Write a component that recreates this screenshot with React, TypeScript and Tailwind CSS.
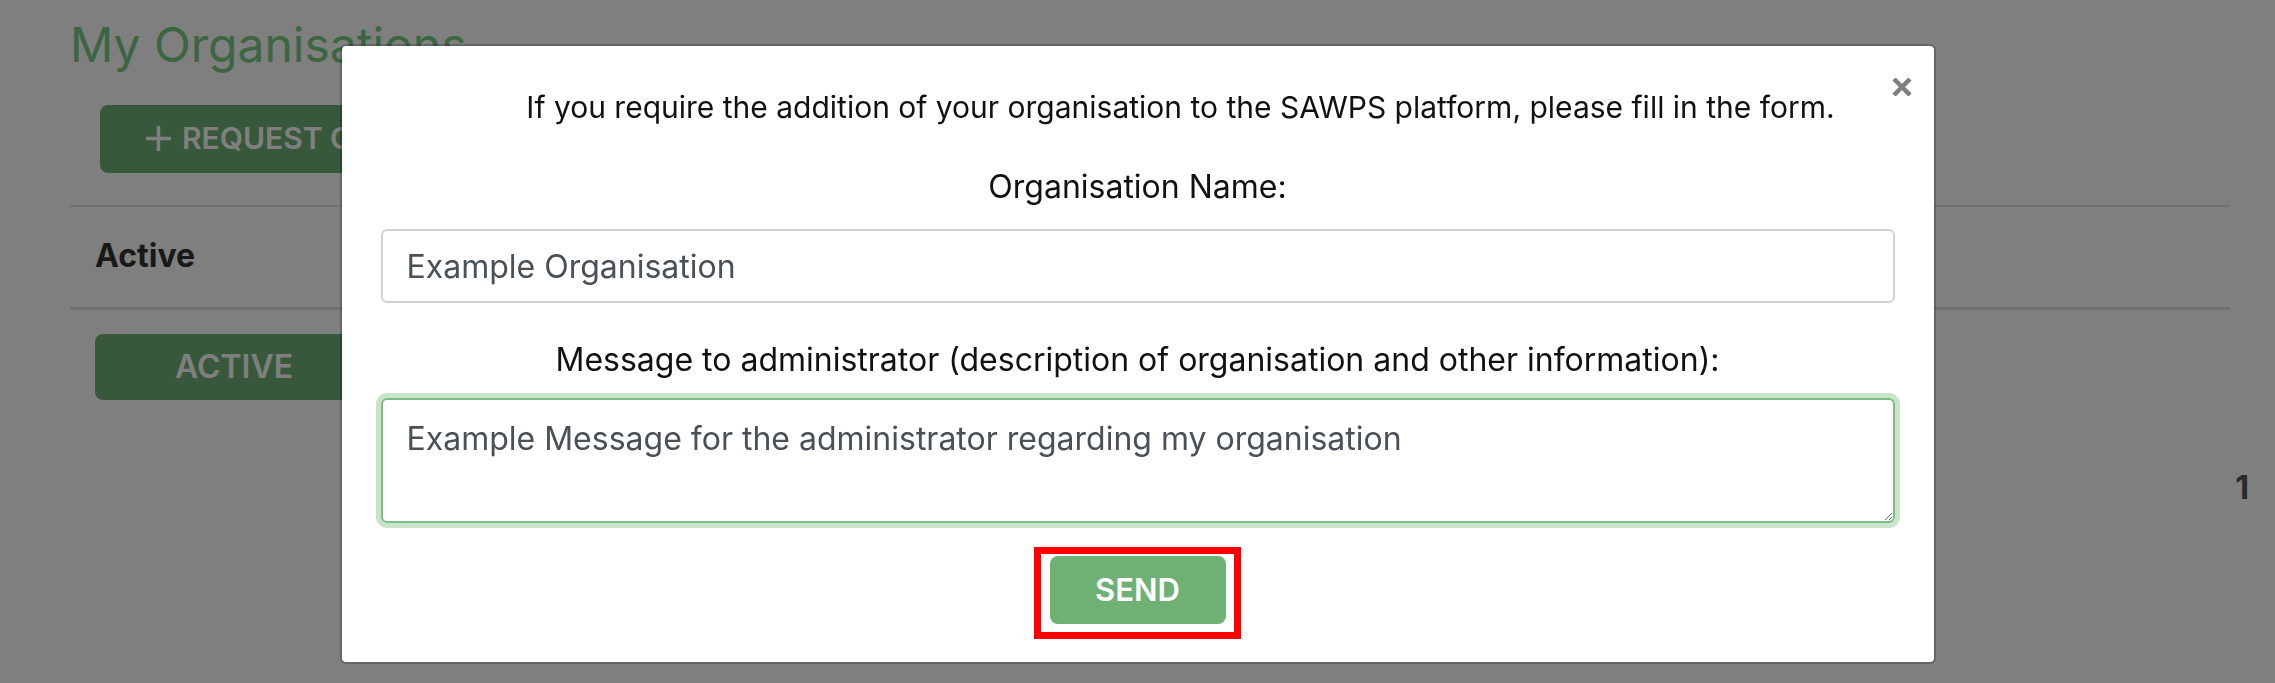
import { useState } from "react"

function PlusGlyph() {
  return (
    <svg width="27" height="27" viewBox="0 0 27 27" className="shrink-0">
      <path d="M13.5 1v25M1 13.5h25" stroke="currentColor" strokeWidth="3.5" />
    </svg>
  )
}

function CloseGlyph() {
  return (
    <svg width="20" height="18" viewBox="0 0 20 18">
      <path d="M2 1l16 16M18 1L2 17" stroke="currentColor" strokeWidth="4.5" />
    </svg>
  )
}

function OrganisationsPage() {
  return (
    <div className="min-h-[683px] bg-white pl-[70px] pr-[45px] pt-[16px]">
      <h1 className="text-[48px] leading-[57.6px] font-normal text-[#76cc83]">My Organisations</h1>

      <button className="mt-[31px] ml-[30px] flex h-[68px] items-center gap-[10px] rounded-lg bg-[#6fb175] px-[45px] text-[30px] font-semibold text-white">
        <PlusGlyph />
        REQUEST ORGANISATION
      </button>

      <div className="mt-[32px] border-t-2 border-[#dee2e6]">
        <div className="border-b-[3px] border-[#dee2e6] pt-[25px] pb-[27px] pl-[25px] text-[32px] font-bold leading-[48px] text-[#333]">
          Active
        </div>
        <div className="py-[24px] pl-[25px]">
          <button className="h-[66px] w-[278px] rounded-lg bg-[#6fb175] text-[32px] font-semibold text-white">
            ACTIVE
          </button>
        </div>
      </div>

      <div className="-mr-[19px] mt-[40px] flex justify-end">
        <span className="text-[32px] font-bold leading-[48px] text-[#555]">1</span>
      </div>
    </div>
  )
}

function RequestModal() {
  const [name, setName] = useState("Example Organisation")
  const [message, setMessage] = useState("Example Message for the administrator regarding my organisation")

  return (
    <div className="fixed inset-0 flex items-start justify-center bg-black/50 pt-[44px]">
      <div className="relative w-[1596px] rounded-md border-2 border-black/20 bg-white bg-clip-padding px-[39px] pt-[38px] pb-[38px] text-[32px] leading-[48px] text-[#111]">
        <button className="absolute right-[22px] top-[32px] text-black/50" aria-label="Close">
          <CloseGlyph />
        </button>

        <p className="ml-[86px] text-center text-[30px] leading-[47px]">
          If you require the addition of your organisation to the SAWPS platform, please fill in the form.
        </p>

        <label className="mt-[32px] block text-center">Organisation Name:</label>
        <input
          value={name}
          onChange={(e) => setName(e.target.value)}
          className="mt-[18px] block h-[74px] w-full rounded-md border-2 border-[#ced4da] px-[24px] text-[32px] text-[#495057] outline-none"
        />

        <label className="mt-[33px] block text-center">
          Message to administrator (description of organisation and other information):
        </label>
        <textarea
          value={message}
          onChange={(e) => setMessage(e.target.value)}
          className="mt-[14px] block h-[125px] w-full rounded-md border-2 border-[#7ebc84] px-[24px] pt-[15px] text-[32px] leading-[48px] text-[#495057] shadow-[0_0_0_5px_#c8e4c9] outline-none"
        />

        <div className="mt-[33px] flex justify-center">
          <div className="relative">
            <button className="h-[68px] w-[176px] rounded-lg bg-[#6fb175] text-[31px] font-semibold text-white">
              SEND
            </button>
            {/* highlight box around the send button */}
            <span className="pointer-events-none absolute -left-[16px] -top-[9px] -right-[15px] -bottom-[15px] border-[7px] border-[#ff0000]" />
          </div>
        </div>
      </div>
    </div>
  )
}

export default function App() {
  return (
    <div className="relative font-['Inter',sans-serif]">
      <OrganisationsPage />
      <RequestModal />
    </div>
  )
}
